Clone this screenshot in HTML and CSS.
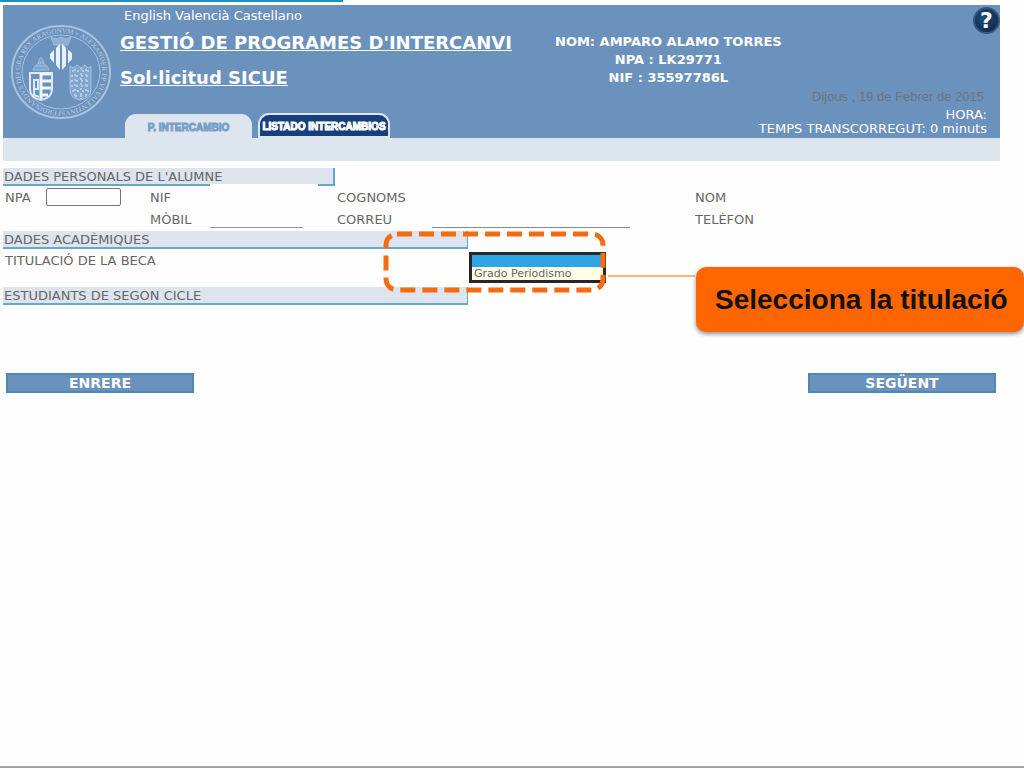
FILE: index.html
```html
<!DOCTYPE html>
<html lang="ca">
<head>
    <meta charset="UTF-8">
    <meta name="viewport" content="width=device-width, initial-scale=1.0">
    <title>Gestió de programes d'intercanvi</title>
    <link rel="stylesheet" href="styles.css">
</head>
<body>
    <div class="loading"><div class="loaded"></div></div>

    <header class="header">
        <svg class="seal" viewBox="0 0 104 98" aria-hidden="true">
            <defs>
                <path id="ring" d="M52 88 a41 39 0 0 1 0 -78 a41 39 0 0 1 0 78"/>
                <clipPath id="diamond"><path d="M39 33L52 20l14 13-14 15z"/></clipPath>
            </defs>
            <g fill="none" stroke="#a9c2de">
                <ellipse cx="52" cy="49" rx="49" ry="46" stroke-width="2"/>
                <ellipse cx="52" cy="49" rx="39" ry="37"/>
            </g>
            <text class="motto"><textPath href="#ring">FERDINANDVS DEI GRA REX ARAGONVM + ALEXANDER PP VI VALENTINVS</textPath></text>
            <!-- crown and diamond -->
            <path d="M42 14l5 2 5-2 5 2 5-2-3 8H45z" fill="#8fb0d3" stroke="#a0bcdb"/>
            <path clip-path="url(#diamond)" d="M43 20v28M49 20v28M55 20v28M61 20v28" stroke="#e8f1fa" stroke-width="4"/>
            <!-- papal shield -->
            <path d="M24 47l2-4 3-2 1-4 2-3 2 3 1 4 3 2 2 4z" fill="#7fa3cb" stroke="#a0bcdb"/>
            <path d="M27 43h10M29 40h6" stroke="#a9c2de"/>
            <path d="M21 50h22v16q0 9-11 11-11-2-11-11z" fill="#6b91bd" stroke="#dce8f5" stroke-width="2"/>
            <path d="M32 50v26M33 51h9M33 58h9M33 65h9M33 72h6" stroke="#eef5fc" stroke-width="3"/>
            <path d="M24 66h5v-9h-4v15l5 2" fill="none" stroke="#dce8f5" stroke-width="2"/>
            <!-- royal shield -->
            <path d="M61 43l3 2 4-3 4 3 4-3 3 3 3-2v24q0 8-11 10-10-2-10-10z" fill="#83a6cd" stroke="#a9c2de"/>
            <path d="M63 48h17M62 53h19M62 58h19M62 63h19M63 68h17M66 73h11M66 46v28M72 45v31M77 46v28" stroke="#b5cbe4" stroke-width="2" stroke-dasharray="2 3"/>
        </svg>

        <div class="titles">
            <nav class="langs"><a href="#">English</a> <a href="#">Valencià</a> <a href="#">Castellano</a></nav>
            <h1>GESTIÓ DE PROGRAMES D'INTERCANVI</h1>
            <h2>Sol·licitud SICUE</h2>
            <nav class="tabs">
                <a class="tab active" href="#">P. INTERCAMBIO</a>
                <a class="tab" href="#">LISTADO INTERCAMBIOS</a>
            </nav>
        </div>

        <div class="user">
            <p>NOM: AMPARO ALAMO TORRES</p>
            <p>NPA : LK29771</p>
            <p>NIF : 35597786L</p>
        </div>

        <div class="session">
            <button class="help" type="button" aria-label="Ajuda">?</button>
            <p class="date">Dijous , 19 de Febrer de 2015</p>
            <p class="time">HORA:</p>
            <p class="time">TEMPS TRANSCORREGUT: 0 minuts</p>
        </div>
    </header>
    <div class="subbar"></div>

    <form class="form">
        <h3 class="section short">DADES PERSONALS DE L'ALUMNE</h3>
        <div class="fields">
            <label for="npa">NPA</label>
            <div><input id="npa" class="npa" type="text"></div>
            <label for="nif">NIF</label>
            <div><input id="nif" class="nif" type="text"></div>
            <label for="cognoms">COGNOMS</label>
            <div><input id="cognoms" class="plain" type="text"></div>
            <label for="nom">NOM</label>
            <div><input id="nom" class="plain" type="text"></div>

            <label class="second" for="mobil">MÒBIL</label>
            <div><input id="mobil" class="mobil" type="text"></div>
            <label for="correu">CORREU</label>
            <div><input id="correu" class="correu" type="email"></div>
            <label for="telefon">TELÈFON</label>
            <div><input id="telefon" class="plain" type="tel"></div>
        </div>

        <h3 class="section">DADES ACADÈMIQUES</h3>
        <div class="degree">
            <label for="titulacio">TITULACIÓ DE LA BECA</label>
            <div class="picker">
                <select id="titulacio" size="2">
                    <option selected></option>
                    <option>Grado Periodismo</option>
                </select>
                <svg class="marker" viewBox="0 0 312 62" aria-hidden="true">
                    <rect x="3" y="3" width="217" height="56" rx="11"/>
                    <path d="M225 45H312"/>
                </svg>
                <div class="callout">Selecciona la titulació</div>
            </div>
        </div>
        <h3 class="section">ESTUDIANTS DE SEGON CICLE</h3>

        <div class="actions">
            <button type="button">ENRERE</button>
            <button type="submit">SEGÜENT</button>
        </div>
    </form>
</body>
</html>
```
FILE: styles.css
```css
* {
    margin: 0;
    padding: 0;
    box-sizing: border-box;
}
body {
    min-height: 100vh;
    background-color: #fefefe;
    border-bottom: 2px solid #a3a3a3;
    font-family: "DejaVu Sans", Verdana, sans-serif;
    font-size: 13px;
    color: #666;
    overflow-x: hidden;
}
a {
    color: inherit;
    text-decoration: none;
}
.loading {
    height: 5px;
}
.loaded {
    width: 33.5%;
    height: 2px;
    background-color: #1993c4;
}

/* header */
.header {
    display: flex;
    height: 133px;
    margin: 0 24px 0 3px;
    background-color: #6b91bd;
    color: white;
}
.seal {
    flex: none;
    width: 104px;
    height: 98px;
    margin: 18px 7px 0 6px;
}
.motto {
    font-family: "Liberation Serif", serif;
    font-size: 7px;
    fill: #b9cfe6;
}
.titles {
    flex: none;
    display: flex;
    flex-direction: column;
    width: 402px;
}
.langs {
    margin-left: 4px;
    line-height: 22px;
}
h1, h2 {
    font-size: 18px;
    line-height: 35px;
    text-decoration: underline;
    white-space: nowrap;
}
h1 {
    margin-top: -2px;
}
.tabs {
    display: flex;
    align-items: flex-end;
    gap: 6px;
    margin-top: auto;
    margin-left: 5px;
    font-family: "Liberation Sans", Arial, sans-serif;
    font-size: 10px;
    font-weight: bold;
    line-height: 24px;
    text-align: center;
    white-space: nowrap;
    -webkit-text-stroke: 1px;
}
.tab {
    width: 132px;
    height: 25px;
    border: 2px solid #dde5ee;
    border-radius: 11px 11px 0 0;
    background-color: #173f7d;
    color: white;
}
.tab.active {
    width: 127px;
    height: 24px;
    background-color: #dde5ee;
    color: #7b9fc8;
}
.user {
    flex: none;
    padding: 28px 0 0 33px;
    font-weight: bold;
    line-height: 18px;
    text-align: center;
}
.session {
    flex: 1;
    min-width: 0;
    display: flex;
    flex-direction: column;
    align-items: flex-end;
    white-space: nowrap;
}
.help {
    width: 27px;
    height: 27px;
    margin-top: 2px;
    border: 2px solid #35587f;
    border-radius: 50%;
    background: radial-gradient(circle at 40% 35%, #214a78, #0b2344);
    color: white;
    font-family: "DejaVu Sans", sans-serif;
    font-size: 22px;
    font-weight: bold;
    line-height: 22px;
}
.date {
    margin: 54px 16px 2px 0;
    font-family: "Liberation Sans", Arial, sans-serif;
    font-size: 13px;
    line-height: 18px;
    color: #6b7480;
}
.time {
    margin-right: 13px;
    line-height: 14px;
}
.subbar {
    height: 23px;
    margin: 0 24px 0 3px;
    background-color: #dde5ee;
}

/* form */
.form {
    margin: 7px 24px 0 3px;
}
.section {
    width: 465px;
    height: 18px;
    padding-left: 1px;
    background-color: #dde4ed;
    border-right: 1px solid #6aa5c5;
    border-bottom: 2px solid #6aa9c6;
    font-size: 13px;
    font-weight: normal;
    line-height: 18px;
}
.section.short {
    width: 332px;
    border-right-width: 2px;
}
.fields {
    display: grid;
    grid-template-columns: 41px 104px 60px 127px 95px 263fr 60px 245fr;
    grid-auto-rows: 22px;
    padding: 0 0 1px 2px;
    line-height: 24px;
}
.second {
    grid-column: 3;
}
.fields input {
    display: block;
    width: 100%;
    height: 20px;
    border: 0;
    background-color: #fefefe;
    font: inherit;
    color: inherit;
}
.fields .npa {
    width: 75px;
    height: 18px;
    margin-top: 2px;
    border: 1px solid #767676;
    border-radius: 2px;
}
.fields .nif {
    width: 108px;
    height: 24px;
    margin-top: -2px;
}
.fields .mobil {
    width: 93px;
    border-bottom: 1px solid #999;
}
.fields .correu {
    width: 198px;
    border-bottom: 1px solid #888;
}
.degree {
    display: flex;
    height: 38px;
    padding-left: 2px;
    line-height: 24px;
}
.degree label {
    width: 464px;
}
.picker {
    position: relative;
    padding-top: 3px;
}
select {
    display: block;
    width: 137px;
    height: 31px;
    border: 3px solid #262626;
    border-radius: 0;
    background-color: #fffde6;
    font-family: "DejaVu Sans", Verdana, sans-serif;
    font-size: 11px;
    color: #666;
    overflow: hidden;
    outline: none;
}
option {
    height: 12px;
    min-height: 12px;
    padding: 0 2px;
    line-height: 12px;
}
option:checked {
    background: linear-gradient(#2da5e5, #2da5e5);
}
.marker {
    position: absolute;
    top: -18px;
    left: -86px;
    width: 312px;
    height: 62px;
    fill: none;
    stroke: #f66a10;
    pointer-events: none;
}
.marker rect {
    stroke-width: 5;
    stroke-dasharray: 15 7;
}
.callout {
    position: absolute;
    top: 18px;
    left: 227px;
    width: 328px;
    height: 65px;
    padding-left: 19px;
    border-radius: 10px;
    background-color: #ff6600;
    box-shadow: 0 2px 4px rgba(0, 0, 0, 0.45);
    color: #111;
    font-family: "Liberation Sans", Arial, sans-serif;
    font-size: 28px;
    font-weight: bold;
    line-height: 66px;
    white-space: nowrap;
}
.actions {
    display: flex;
    justify-content: space-between;
    margin: 68px 4px 0 3px;
}
.actions button {
    width: 188px;
    height: 20px;
    border: 2px solid #4c8ab5;
    background-color: #6b91bd;
    color: white;
    font-family: "DejaVu Sans", Verdana, sans-serif;
    font-size: 14px;
    font-weight: bold;
    line-height: 16px;
}
```
